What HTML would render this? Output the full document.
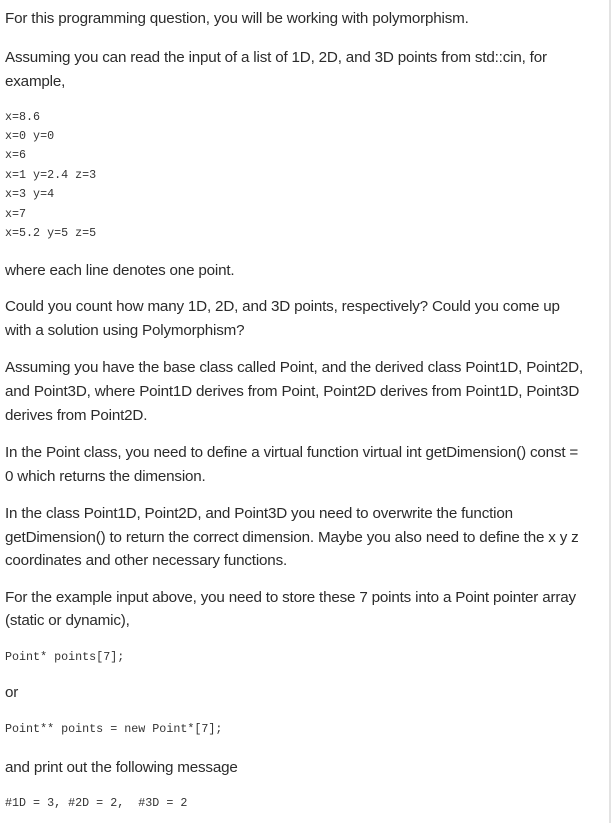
<!DOCTYPE html>
<html><head><meta charset="utf-8"><style>
html,body{margin:0;padding:0;background:#fff;}
body{width:611px;height:823px;position:relative;overflow:hidden;}
.r{position:absolute;right:0;top:0;width:2px;height:823px;background:#e3e3e3;}
.t{position:absolute;left:5px;white-space:pre;font-family:"Liberation Sans",sans-serif;font-size:15.2px;letter-spacing:-0.18px;color:#2b2b2b;line-height:18px;height:18px;}
.m{position:absolute;left:5px;white-space:pre;font-family:"Liberation Mono",monospace;font-size:11.7px;color:#333;line-height:13px;}
</style></head><body>
<div class="r"></div>
<div class="t" style="top:10px">For this programming question, you will be working with polymorphism.</div>
<div class="t" style="top:49px">Assuming you can read the input of a list of 1D, 2D, and 3D points from std::cin, for</div>
<div class="t" style="top:73px">example,</div>
<div class="m" style="top:111px">x=8.6</div>
<div class="m" style="top:130px">x=0 y=0</div>
<div class="m" style="top:149px">x=6</div>
<div class="m" style="top:169px">x=1 y=2.4 z=3</div>
<div class="m" style="top:188px">x=3 y=4</div>
<div class="m" style="top:208px">x=7</div>
<div class="m" style="top:227px">x=5.2 y=5 z=5</div>
<div class="t" style="top:262px">where each line denotes one point.</div>
<div class="t" style="top:298px">Could you count how many 1D, 2D, and 3D points, respectively? Could you come up</div>
<div class="t" style="top:322px">with a solution using Polymorphism?</div>
<div class="t" style="top:359px">Assuming you have the base class called Point, and the derived class Point1D, Point2D,</div>
<div class="t" style="top:383px">and Point3D, where Point1D derives from Point, Point2D derives from Point1D, Point3D</div>
<div class="t" style="top:407px">derives from Point2D.</div>
<div class="t" style="top:444px">In the Point class, you need to define a virtual function virtual int getDimension() const =</div>
<div class="t" style="top:468px">0 which returns the dimension.</div>
<div class="t" style="top:505px">In the class Point1D, Point2D, and Point3D you need to overwrite the function</div>
<div class="t" style="top:529px">getDimension() to return the correct dimension. Maybe you also need to define the x y z</div>
<div class="t" style="top:552px">coordinates and other necessary functions.</div>
<div class="t" style="top:589px">For the example input above, you need to store these 7 points into a Point pointer array</div>
<div class="t" style="top:612px">(static or dynamic),</div>
<div class="m" style="top:651px">Point* points[7];</div>
<div class="t" style="top:684px">or</div>
<div class="m" style="top:723px">Point** points = new Point*[7];</div>
<div class="t" style="top:759px">and print out the following message</div>
<div class="m" style="top:797px">#1D = 3, #2D = 2,  #3D = 2</div>
</body></html>
